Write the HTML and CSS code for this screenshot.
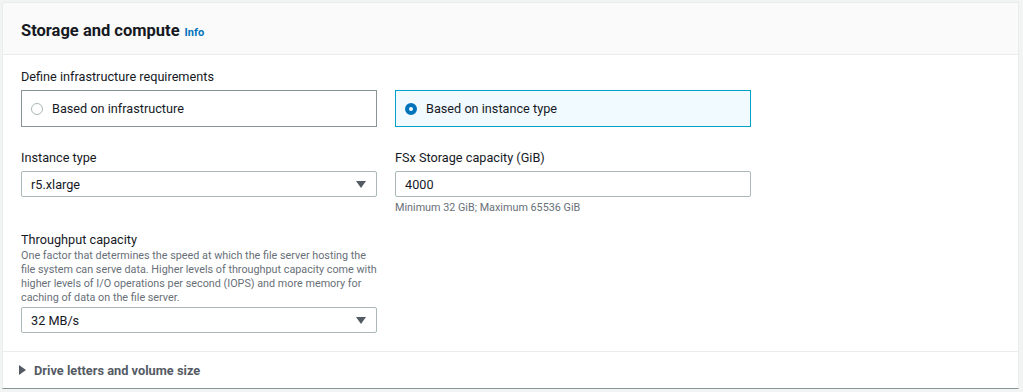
FILE: index.html
```html
<!DOCTYPE html>
<html lang="en">
<head>
    <meta charset="UTF-8">
    <title>Storage and compute</title>
    <link rel="stylesheet" href="styles.css">
</head>
<body>
    <div class="panel">
        <div class="panel-header">
            <h2>Storage and compute</h2>
            <a class="info-link" href="#">Info</a>
        </div>

        <div class="panel-body">
            <div class="field-label">Define infrastructure requirements</div>
            <div class="tiles">
                <label class="tile">
                    <span class="radio"></span>
                    <span>Based on infrastructure</span>
                </label>
                <label class="tile selected">
                    <span class="radio checked"></span>
                    <span>Based on instance type</span>
                </label>
            </div>

            <div class="fields">
                <div class="field">
                    <div class="field-label">Instance type</div>
                    <div class="select">
                        <span>r5.xlarge</span>
                        <span class="caret"></span>
                    </div>
                </div>
                <div class="field">
                    <div class="field-label">FSx Storage capacity (GiB)</div>
                    <div class="input">4000</div>
                    <div class="hint">Minimum 32 GiB; Maximum 65536 GiB</div>
                </div>
                <div class="field">
                    <div class="field-label tight">Throughput capacity</div>
                    <div class="description">One factor that determines the speed at which the file server hosting the file system can serve data. Higher levels of throughput capacity come with higher levels of I/O operations per second (IOPS) and more memory for caching of data on the file server.</div>
                    <div class="select">
                        <span>32 MB/s</span>
                        <span class="caret"></span>
                    </div>
                </div>
            </div>
        </div>

        <div class="panel-footer">
            <span class="expand-icon"></span>
            <span>Drive letters and volume size</span>
        </div>
    </div>
</body>
</html>
```

FILE: styles.css
```css
body {
    margin: 0;
    background-color: #f2f3f3;
    font-family: Roboto, "Liberation Sans", sans-serif;
    color: #16191f;
}

.panel {
    margin: 2px 4px 0 2px;
    background-color: #fff;
    border: 1px solid #eaeded;
    border-bottom: 1px solid #879596;
}

.panel-header {
    display: flex;
    align-items: baseline;
    gap: 5px;
    height: 52px;
    padding: 17px 18px 0;
    background-color: #fafafa;
    border-bottom: 1px solid #eaeded;
    box-sizing: border-box;
}

.panel-header h2 {
    margin: 0;
    font-size: 16.5px;
    font-weight: bold;
    line-height: 22px;
}

.info-link {
    color: #0073bb;
    font-size: 11px;
    font-weight: bold;
    text-decoration: none;
}

.panel-body {
    padding: 12px 18px 18px;
    border-bottom: 1px solid #eaeded;
}

.field-label {
    font-size: 12.7px;
    line-height: 20px;
    margin-bottom: 3px;
}

.field-label.tight {
    line-height: 18px;
    margin-bottom: 0;
}

.tiles {
    display: grid;
    grid-template-columns: 356px 356px;
    column-gap: 18px;
}

.tile {
    display: flex;
    align-items: center;
    gap: 9px;
    height: 37px;
    padding: 0 9px;
    box-sizing: border-box;
    border: 1px solid #879596;
    font-size: 12.7px;
}

.tile.selected {
    border-color: #00a1c9;
    background-color: #f1faff;
}

.radio {
    width: 12px;
    height: 12px;
    border: 1px solid #aab7b8;
    border-radius: 50%;
    box-sizing: border-box;
    background-color: #fff;
}

.radio.checked {
    border: 4px solid #0073bb;
}

.fields {
    display: grid;
    grid-template-columns: 356px 356px;
    column-gap: 18px;
    row-gap: 15px;
    align-items: start;
    margin-top: 21px;
}

.select,
.input {
    display: flex;
    align-items: center;
    justify-content: space-between;
    height: 26px;
    padding: 0 10px 0 9px;
    box-sizing: border-box;
    border: 1px solid #aab7b8;
    border-radius: 2px;
    font-size: 12.7px;
}

.caret {
    width: 0;
    height: 0;
    border-left: 5px solid transparent;
    border-right: 5px solid transparent;
    border-top: 7px solid #545b64;
}

.hint {
    margin-top: 3px;
    font-size: 10.8px;
    line-height: 16px;
    color: #687078;
}

.description {
    font-size: 10.8px;
    line-height: 14px;
    color: #687078;
    margin-bottom: 2px;
}

.panel-footer {
    display: flex;
    align-items: center;
    gap: 8px;
    height: 36px;
    padding: 0 16px;
    font-size: 12.8px;
    font-weight: bold;
    color: #545b64;
}

.expand-icon {
    width: 0;
    height: 0;
    border-top: 5px solid transparent;
    border-bottom: 5px solid transparent;
    border-left: 7px solid #545b64;
}
```
